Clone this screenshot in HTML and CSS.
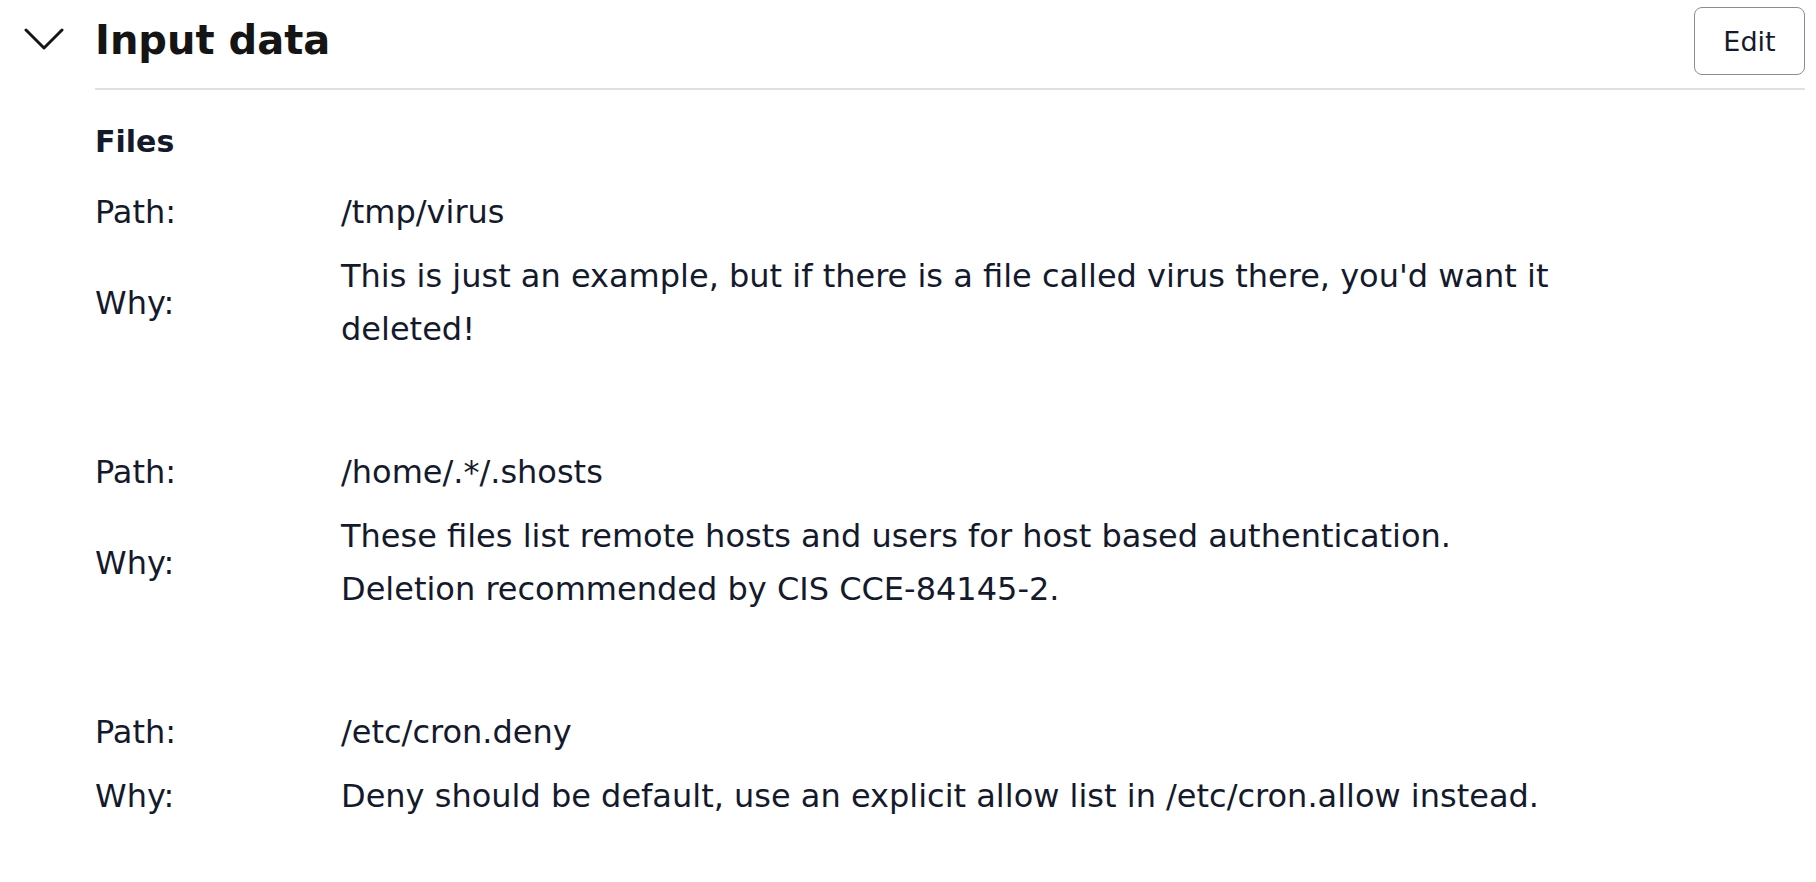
FILE: index.html
```html
<!DOCTYPE html>
<html lang="en">
<head>
<meta charset="utf-8">
<title>Input data</title>
<link rel="stylesheet" href="styles.css">
</head>
<body>
<section class="section">
  <div class="header">
    <button class="toggle" aria-label="Collapse">
      <svg width="40" height="22" viewBox="0 0 40 22"><polyline points="2,2 20,20 38,2" fill="none" stroke="#151515" stroke-width="3" stroke-linecap="round" stroke-linejoin="round"/></svg>
    </button>
    <div class="title-bar">
      <h2 class="title">Input data</h2>
      <button class="edit">Edit</button>
    </div>
  </div>
  <div class="content">
    <h3 class="sub">Files</h3>
    <dl class="group">
      <dt>Path:</dt><dd>/tmp/virus</dd>
      <dt>Why:</dt><dd>This is just an example, but if there is a file called virus there, you'd want it deleted!</dd>
    </dl>
    <dl class="group">
      <dt>Path:</dt><dd>/home/.*/.shosts</dd>
      <dt>Why:</dt><dd>These files list remote hosts and users for host based authentication. Deletion recommended by CIS CCE-84145-2.</dd>
    </dl>
    <dl class="group">
      <dt>Path:</dt><dd>/etc/cron.deny</dd>
      <dt>Why:</dt><dd>Deny should be default, use an explicit allow list in /etc/cron.allow instead.</dd>
    </dl>
  </div>
</section>
</body>
</html>
```
FILE: styles.css
```css
html, body {
  margin: 0;
  padding: 0;
  background: #ffffff;
}
body {
  font-family: "DejaVu Sans", "Open Sans", sans-serif;
  color: #141a2c;
}
.section {
  padding-right: 11px;
}
.header {
  display: flex;
  align-items: stretch;
}
.toggle {
  width: 95px;
  flex: none;
  border: 0;
  background: none;
  padding: 0 8px 12px 0;
  display: flex;
  align-items: center;
  justify-content: center;
  cursor: pointer;
}
.title-bar {
  flex: 1;
  display: flex;
  align-items: center;
  justify-content: space-between;
  height: 88px;
  border-bottom: 2px solid #e0e0e0;
}
.title {
  margin: 0;
  font-size: 40px;
  font-weight: 700;
  color: #151515;
  line-height: 1;
  padding-bottom: 8px;
}
.edit {
  width: 111px;
  height: 68px;
  margin-bottom: 6px;
  font-family: inherit;
  font-size: 27px;
  color: #141a2c;
  background: #fff;
  border: 1.5px solid #8a8d90;
  border-radius: 8px;
  cursor: pointer;
}
.content {
  padding-left: 95px;
  padding-top: 25px;
}
.sub {
  margin: 0 0 18px 0;
  font-size: 30px;
  font-weight: 700;
  line-height: 53px;
}
.group {
  display: grid;
  grid-template-columns: 246px minmax(0, 1230px);
  row-gap: 11px;
  align-items: center;
  margin: 0 0 90px 0;
  font-size: 32px;
  line-height: 53px;
}
.group dt, .group dd {
  margin: 0;
}
```
